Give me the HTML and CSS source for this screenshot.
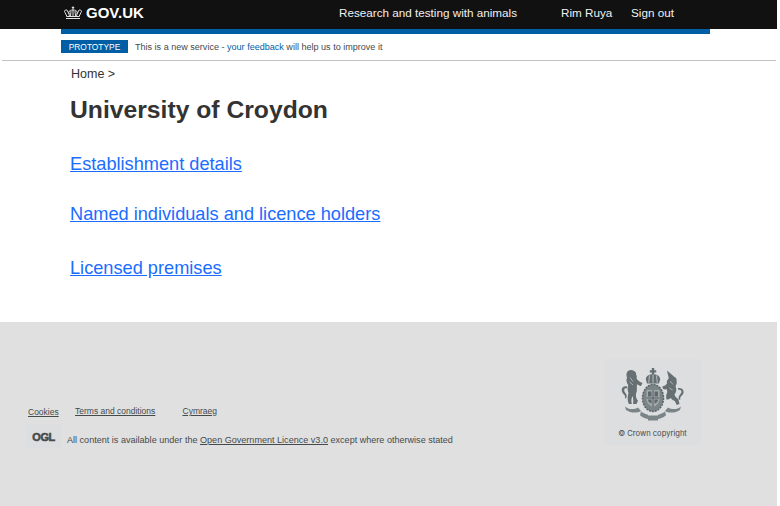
FILE: index.html
```html
<!DOCTYPE html>
<html lang="en">
<head>
    <meta charset="UTF-8">
    <title>University of Croydon</title>
    <link rel="stylesheet" href="styles.css">
</head>
<body>
    <header class="site-header">
        <a class="logo" href="#">
            <svg class="crown" width="18" height="14" viewBox="0 0 18 14" fill="none" stroke="#e4e4e4" stroke-width="1">
                <path d="M2 12.500h14M2.500 10.500h13"/>
                <path d="M3 10.500 1 6.500a1.500 1.500 0 1 1 2.500-1.500L5 8M15 10.500l2-4a1.500 1.500 0 1 0-2.500-1.500L13 8"/>
                <path d="M5.500 10.500 4.800 6.500C5 4.500 7 4 9 4s4 .5 4.200 2.500l-.7 4M9 4v6.500M7 5l-.5 5.500M11 5l.5 5.500"/>
                <path d="M9 .5v3M7.800 1.500h2.400" stroke-width="1.200"/>
            </svg>
            <span>GOV.UK</span>
        </a>
        <a class="service-name" href="#">Research and testing with animals</a>
        <a class="user-name" href="#">Rim Ruya</a>
        <a class="sign-out" href="#">Sign out</a>
    </header>
    <div class="header-bar"></div>

    <div class="phase-banner">
        <strong class="phase-tag">PROTOTYPE</strong>
        <span>This is a new service - <a href="#">your feedback</a> will help us to improve it</span>
    </div>

    <main class="content">
        <div class="breadcrumb">Home &gt;</div>
        <h1>University of Croydon</h1>
        <ul class="section-links">
            <li><a href="#">Establishment details</a></li>
            <li><a href="#">Named individuals and licence holders</a></li>
            <li><a href="#">Licensed premises</a></li>
        </ul>
    </main>

    <footer class="site-footer">
        <div class="footer-meta">
            <ul class="footer-links">
                <li class="cookies"><a href="#">Cookies</a></li>
                <li class="terms"><a href="#">Terms and conditions</a></li>
                <li><a href="#">Cymraeg</a></li>
            </ul>
            <div class="licence">
                <span class="ogl">OGL</span>
                <p>All content is available under the <a href="#">Open Government Licence v3.0</a> except where otherwise stated</p>
            </div>
        </div>
        <div class="copyright">
            <svg class="crest" width="66" height="54" viewBox="0 0 66 54" fill="#667073">
                <!-- crown -->
                <path d="M31.800 0h2.400v2.200h2v2.200h-2v1.800c3.300.3 5.800 2 6 5l-1.200 4.300H27l-1.200-4.300c.2-3 2.700-4.700 6-5V4.400h-2V2.200h2z"/>
                <path d="M33 6.500v8.300M29.500 7.500l-.8 7.300M36.500 7.500l.8 7.300" stroke="#dcdde0" stroke-width=".7" fill="none"/>
                <!-- shield with garter -->
                <ellipse cx="33" cy="30" rx="10.500" ry="13.500" fill="#7b8487"/>
                <ellipse cx="33" cy="30" rx="10.500" ry="13.500" fill="none" stroke="#5a6467" stroke-width="1.500" stroke-dasharray="2 1"/>
                <path d="M26.500 22h13v9c0 4-3 6.500-6.500 8-3.500-1.500-6.500-4-6.500-8z" fill="#a3aaac"/>
                <path d="M33 22v17M26.500 30h13" stroke="#555f62" stroke-width="1" fill="none"/>
                <path d="M28 23.500h3.500v5H28zm6.500 0H38v5h-3.500zM28 31.500h3.500v4c-2-.5-3.500-2-3.500-4zm6.500 0H38c0 2-1.500 3.500-3.500 4z" fill="#5f696c"/>
                <!-- lion -->
                <path d="M8 3c1.500-1.200 4.500-1.500 6 0 1.500.5 2.500 2 2 3.500 1 1.200 1 3 .5 4 1.500 2 3.500 3.500 6 4.500l-1.500 3c-1.500-.3-3-1-4-1.800-.5 3 .5 6.500-1 9.500-.5 3 .5 5.500 2 7l-1.500 3.300h-3.500c.5-3 .3-5.500-.5-8-1.300 2.500-1.300 5-.7 8H8.800c-1.300-3-1.600-7-.3-11-1-2.500-1.200-5.500-.3-8C6.500 15 6 12 7 9.500 6 7.500 6.300 4.500 8 3z"/>
                <path d="M10 9.500l3 4M9.500 14l3.500 3" stroke="#dcdde0" stroke-width=".6" fill="none"/>
                <path d="M7 18.500c-2.500-1-4.700.3-5.200 2.500-.5 2.500 1 4.500 2.500 6 1 1 1 2 .5 3l1 .5c1.500-1.500 1-3.500 0-5-1-1.300-2-2.800-1.500-4 .3-1 1.500-1.500 2.700-1z"/>
                <!-- unicorn -->
                <path d="M47 2.500l7.500 6.500c1.500.5 2.500 2 2 3.500.5 2 .3 4-1 5.500 1.300 3.500 1 6-1 8.500.5 2 2.300 3.500 3.800 4.500l1.200 5-2.800 1-1.900-4c-1.500-.5-3-1.500-4-3-1.500 1-3 1.500-4.300 1.500-.5-2-.5-3.500 0-5.500 1-1 1-3 0-5-1 .5-2 .5-3.300 0l-1-2.500c2.300-.5 3.800-1.500 4.800-3-.5-2 0-4 1.800-5z"/>
                <path d="M50 13l3 3.500M49.500 20l3 2" stroke="#dcdde0" stroke-width=".6" fill="none"/>
                <path d="M58 20c2.500-.5 5 .5 5.500 3s-1 4-2.500 5.500c-1 1-1 2-.5 2.800l-1 .7c-1.500-1.500-1-3.500.2-5 1-1.200 2-2.500 1.700-3.700-.3-1-1.500-1.800-3.400-1.800z"/>
                <!-- motto scroll -->
                <path d="M5 38.500c3 3 9 3.500 13 1l3 3.500c-4 2.500-11 2-15-1zM48 39.500c4 2.500 10 2 13-1l-1 3.500c-4 3-11 3.500-15 1z" fill="#7b8487"/>
                <path d="M21 43.500c2.500 1.800 4.500 2.700 7 3.200v4.300c-3-.5-5.500-1.500-8-3.700zM45 43.500c-2.500 1.800-4.500 2.700-7 3.200V51c3-.5 5.500-1.500 8-3.700zM28 47.500h10v5H28z" fill="#7b8487"/>
            </svg>
            <span>© Crown copyright</span>
        </div>
    </footer>
</body>
</html>
```

FILE: styles.css
```css
html {
    background-color: #ffffff;
}

body {
    margin: 0;
    width: 777px;
    height: 506px;
    display: flex;
    flex-direction: column;
    font-family: "Liberation Sans", Arial, sans-serif;
    color: #333333;
    background-color: #ffffff;
}

a {
    color: inherit;
}

/* Header */
.site-header {
    display: flex;
    align-items: center;
    height: 25px;
    padding: 0 0 4px 64px;
    background-color: #111111;
    color: #ffffff;
}

.site-header a {
    text-decoration: none;
}

.logo {
    display: flex;
    align-items: center;
    gap: 4px;
    width: 275px;
    font-size: 15px;
    font-weight: bold;
}

.crown {
    flex-shrink: 0;
}

.service-name,
.user-name,
.sign-out {
    font-size: 11.7px;
    color: #f0f0f0;
}

.service-name {
    width: 222px;
}

.user-name {
    width: 70px;
}

.header-bar {
    height: 5px;
    width: 649px;
    margin-left: 61px;
    background-color: #005ea5;
}

/* Phase banner */
.phase-banner {
    display: flex;
    align-items: center;
    gap: 7px;
    height: 26px;
    margin: 0 1px 0 2px;
    padding-left: 59px;
    border-bottom: 1px solid #bfc1c3;
    font-size: 9.05px;
    color: #454a4c;
}

.phase-banner a {
    color: #005ea5;
    text-decoration: none;
}

.phase-tag {
    width: 67px;
    height: 13px;
    margin-bottom: 1px;
    line-height: 14px;
    text-align: center;
    font-size: 8.4px;
    font-weight: normal;
    background-color: #005ea5;
    color: #ffffff;
}

/* Content */
.content {
    flex-grow: 1;
    padding-left: 70px;
}

.breadcrumb {
    margin: 6px 0 0 1px;
    font-size: 12.5px;
    line-height: 15px;
}

h1 {
    margin: 13px 0 0;
    font-size: 24.7px;
    line-height: 30px;
}

.section-links {
    list-style: none;
    margin: 29px 0 0;
    padding: 0;
    font-size: 18.2px;
    line-height: 21px;
}

.section-links li {
    margin-bottom: 29px;
}

.section-links li:nth-child(2) {
    margin-bottom: 33px;
}

.section-links a {
    color: #1a6dff;
}

/* Footer */
.site-footer {
    display: flex;
    justify-content: space-between;
    height: 184px;
    padding: 37px 76px 0 26px;
    box-sizing: border-box;
    background-color: #e0e0e0;
    font-size: 9.07px;
    color: #454a4c;
}

.footer-meta {
    padding-top: 47px;
}

.footer-links {
    display: flex;
    list-style: none;
    margin: 0 0 0 2px;
    padding: 0;
    font-size: 8.5px;
    line-height: 10px;
}

.cookies {
    width: 47px;
    padding-top: 1px;
}

.terms {
    width: 107.500px;
}

.licence {
    display: flex;
    align-items: flex-end;
    gap: 6px;
    margin-top: 7px;
}

.licence p {
    margin: 0 0 3px;
}

.ogl {
    width: 35px;
    height: 24px;
    line-height: 26px;
    text-align: center;
    background-color: #dcdee0;
    font-size: 11px;
    font-weight: bold;
    letter-spacing: -0.5px;
    color: #454a4c;
    -webkit-text-stroke: 0.5px #454a4c;
}

.copyright {
    display: flex;
    flex-direction: column;
    align-items: center;
    gap: 7px;
    width: 97px;
    height: 86px;
    padding-top: 9px;
    box-sizing: border-box;
    background-color: #dcdee0;
    font-family: "Inter", "Open Sans", sans-serif;
    font-size: 7.6px;
}

.crest {
    flex-shrink: 0;
}
```
